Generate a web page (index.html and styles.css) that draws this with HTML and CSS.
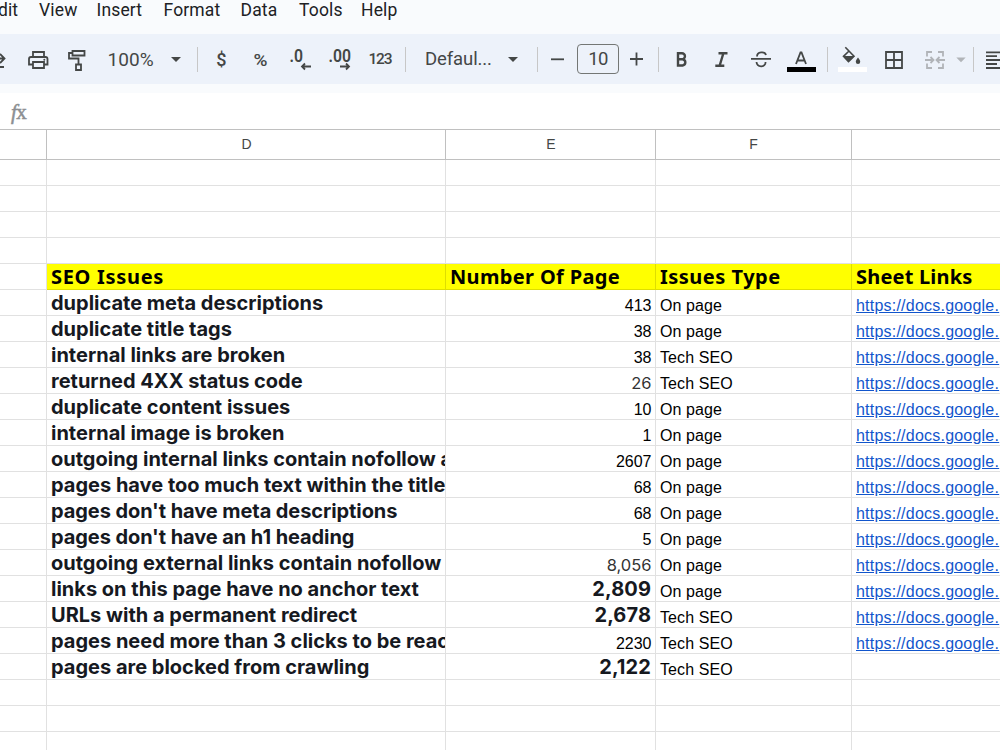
FILE: index.html
```html
<!DOCTYPE html>
<html lang="en">
<head>
<meta charset="utf-8">
<title>SEO Issues</title>
<link rel="stylesheet" href="styles.css">
</head>
<body>
<nav class="menu">
  <span class="m-edit">Edit</span><span class="m-view">View</span><span class="m-insert">Insert</span><span class="m-format">Format</span><span class="m-data">Data</span><span class="m-tools">Tools</span><span class="m-help">Help</span>
</nav>
<div class="toolbar">
  <svg class="w19" viewBox="0 0 19 50"><path d="M-5 24.500H4M0 20l4.500 4.500-4.500 4.500M-5 33H4" class="ln"/></svg>
  <svg class="w38" viewBox="19 34 38 50"><path d="M33 57V52h11v5M33 64.500h-4V59q0-2 2-2h14.500q2 0 2 2v5.500H44M33 62h11v6H33z" class="ln"/><circle cx="44.300" cy="59.700" r="1" class="fl"/></svg>
  <svg class="w38" viewBox="57 34 38 50"><path d="M72.500 51h12v4.500h-12zM72.500 53H69v5.500h9.500V64M76 64.500h5V70h-5z" class="ln"/></svg>
  <div class="zoomlevel"><span class="t-zoom">100%</span><i class="caret"></i></div>
  <b class="sep"></b>
  <svg class="currency" viewBox="198 34 43 50"><text x="216.300" y="66" class="ct">$</text></svg>
  <svg class="w39" viewBox="241 34 39 50"><text x="253.500" y="65.500" class="pct" textLength="14" lengthAdjust="spacingAndGlyphs">%</text></svg>
  <svg class="w40" viewBox="280 34 40 50"><text x="289.500" y="62" class="dec" textLength="13.500" lengthAdjust="spacingAndGlyphs">.0</text><path d="M311 66.500h-9M305 63.500l-3 3 3 3" class="ln"/></svg>
  <svg class="w40" viewBox="320 34 40 50"><text x="328.500" y="62" class="dec" textLength="22.500" lengthAdjust="spacingAndGlyphs">.00</text><path d="M340 66.500h9M346 63.500l3 3-3 3" class="ln"/></svg>
  <div class="number">123</div>
  <b class="sep"></b>
  <div class="font"><span class="t-font">Defaul...</span><i class="caret"></i></div>
  <b class="sep"></b>
  <svg class="w39" viewBox="538 34 39 50"><path d="M551 59.300h13" class="ln"/></svg>
  <div class="size">10</div>
  <svg class="w39" viewBox="619 34 39 50"><path d="M630 59h13M636.500 52.500v13" class="ln"/></svg>
  <b class="sep"></b>
  <svg class="w42" viewBox="659 34 42 50"><path d="M678 53.300h4a2.900 2.900 0 0 1 0 5.900H678zM678 59.200h4.700a3.200 3.200 0 0 1 0 6.300H678z" class="bold"/></svg>
  <svg class="w40" viewBox="701 34 40 50"><path d="M718.500 53.300h9M715.300 65.800h9M723.300 53.500L719.700 65.500" class="bold"/></svg>
  <svg class="w40" viewBox="741 34 40 50"><path d="M751 58.900h20M757 56.500c0-5 8-5.500 9-1.500M756.500 62c.5 6 9.500 5.500 9 0" class="ln"/></svg>
  <svg class="w46" viewBox="781 34 46 50"><path d="M796 64l4.500-11.500h1L806 64M798 60.500h6" class="ln"/><path d="M787 67h29v5h-29z" fill="#000"/></svg>
  <b class="sep"></b>
  <svg class="w46" viewBox="828 34 46 50"><path d="M845.300 47.300l8.700 9-5.500 5.200-5-5.200 5.500-5.300" class="ln thin"/><path d="M843 56h11.500l-6 6z" class="fl"/><path d="M858 57.500c1.300 1.600 2.200 2.800 2.200 4.200a2.200 2.200 0 0 1-4.400 0c0-1.400.9-2.600 2.200-4.200z" class="fl"/><path d="M838 67h29v5h-29z" fill="#fff"/></svg>
  <svg class="w42" viewBox="874 34 42 50"><path d="M886 52h16v16h-16zM894 52v16M886 60h16" class="ln"/></svg>
  <svg class="w57" viewBox="916 34 57 50"><path d="M932 52h-5v4.500M932 68h-5v-4.500M938 52h5v4.500M938 68h5v-4.500M925 60h8M930.500 57l3 3-3 3M945 60h-8M939.500 57l-3 3 3 3" class="ln pale"/><path d="M956.300 57.500h9.400l-4.700 4.700z" class="paleFill"/></svg>
  <b class="sep"></b>
  <svg class="w26" viewBox="974 34 26 50"><path d="M986 52.300h16M986 56.200h11M986 60h16M986 64h11M986 68h16" class="ln"/></svg>
</div>
<div class="formula"><span class="f">f</span><span class="x">x</span></div>
<main class="sheet" id="sheet">
  <div class="row head"><div></div><div>D</div><div>E</div><div>F</div><div></div></div>
</main>
<script src="sheet.js"></script>
</body>
</html>
```
FILE: styles.css
```css
body { margin: 0; width: 1000px; height: 750px; overflow: hidden; background: #fff; font-family: "Liberation Sans", Arial, sans-serif; }
.menu { box-sizing: border-box; height: 34px; background: #f9fbfd; display: flex; font: 17.5px/20px Roboto, sans-serif; color: #202124; overflow: hidden; }
.menu span { flex: none; white-space: nowrap; letter-spacing: .15px; }
.m-edit { width: 51px; margin-left: -12px; }
.m-view { width: 57.500px; }
.m-insert { width: 67px; }
.m-format { width: 77px; }
.m-data { width: 58.500px; }
.m-tools { width: 62px; }
.toolbar { height: 50px; background: #edf2fa; display: flex; align-items: center; overflow: hidden; color: #444746; font-family: Roboto, sans-serif; }
.toolbar svg { height: 50px; flex: none; display: block; }
.w19 { width: 19px; } .w26 { width: 26px; } .w38 { width: 38px; } .w39 { width: 39px; } .w40 { width: 40px; }
.w42 { width: 42px; } .w46 { width: 46px; } .w57 { width: 57px; } .currency { width: 43px; }
.sep { width: 1px; height: 25px; background: #c7c7c7; flex: none; }
.zoomlevel, .font { display: flex; align-items: center; box-sizing: border-box; flex: none; }
.zoomlevel { width: 102px; padding-left: 12.500px; font-size: 19px; }
.font { width: 131px; padding-left: 19px; font-size: 18.500px; }
.t-zoom { width: 63px; letter-spacing: .1px; }
.t-font { width: 83px; letter-spacing: -.1px; }
.caret { border: 5px solid transparent; border-top-color: #444746; border-bottom: 0; }
.number { width: 45px; box-sizing: border-box; padding-left: 8.500px; font-size: 15.500px; font-weight: 500; letter-spacing: -1.200px; flex: none; }
.size { width: 42px; height: 30px; box-sizing: border-box; border: 1px solid #747775; border-radius: 4px; text-align: center; font-size: 18.500px; line-height: 28px; letter-spacing: -.6px; flex: none; }
.ct { font: 500 18px Roboto, sans-serif; fill: #444746; }
.pct { font: 500 17px Roboto, sans-serif; fill: #444746; }
.dec { font: 600 18px Roboto, sans-serif; fill: #444746; }
.ln { fill: none; stroke: #444746; stroke-width: 1.800; }
.bold { fill: none; stroke: #444746; stroke-width: 2.400; }
.thin { stroke-width: 1.600; }
.pale { stroke: #b1b4b8; }
.fl { fill: #444746; }
.paleFill { fill: #b1b4b8; }
.formula { height: 45px; box-sizing: border-box; border-top: 9px solid #f9fbfd; padding: 7px 0 0 11px; font: 21px/24px "Liberation Serif", serif; color: #8c8f92; -webkit-text-stroke: .5px #8c8f92; }
.f { font-style: italic; }
.x { margin-left: -.5px; }
.sheet { border-top: 1px solid #c0c0c0; }
.row { display: grid; grid-template-columns: 47px 399px 210px 196px 148px; height: 26px; }
.row > div { box-sizing: border-box; border-right: 1px solid #e1e1e1; border-bottom: 1px solid #e1e1e1; overflow: hidden; white-space: nowrap; padding-left: 4px; font-size: 16px; line-height: 31px; color: #000; }
.row > div:last-child { border-right: 0; }
.row > div:first-child { padding: 0; }
.row > div:nth-child(4) { letter-spacing: .1px; }
.row.head { height: 30px; }
.row.head > div { border-color: #c0c0c0; text-align: center; padding: 0 0 0 1px; font-size: 14px; line-height: 29px; color: #444746; }
.row.head > div:nth-child(4) { padding: 0; letter-spacing: 0; }
.row .issue { font: 700 20px/27px Inter, sans-serif; letter-spacing: 0; color: #16191f; }
.row .apostrophe { letter-spacing: -.08px; }
.row .count { text-align: right; padding-right: 3.500px; }
.row .gray { color: #333; font-family: Inter, sans-serif; font-size: 16.500px; line-height: 30px; }
.row .big { font: 700 20px/26px Inter, sans-serif; letter-spacing: .1px; padding-right: 4px; color: #16191f; }
.row.title > div:not(:first-child) { background: #ff0; border-color: #dede00; font: 700 20px/26px "Noto Sans", sans-serif; }
.row.title > .t1 { letter-spacing: .7px; }
.row.title > .t2 { letter-spacing: .35px; }
.row.title > div.t3 { letter-spacing: .5px; }
.row.title > .t4 { letter-spacing: .2px; }
.row .link { color: #1155cc; text-decoration: underline; letter-spacing: .22px; }
```
FILE: sheet.js
```js
const records = [
  ["duplicate meta descriptions", "413", "On page"],
  ["duplicate title tags", "38", "On page"],
  ["internal links are broken", "38", "Tech SEO"],
  ["returned 4XX status code", "26", "Tech SEO", "gray"],
  ["duplicate content issues", "10", "On page"],
  ["internal image is broken", "1", "On page"],
  ["outgoing internal links contain nofollow a", "2607", "On page"],
  ["pages have too much text within the title", "68", "On page"],
  ["pages don't have meta descriptions", "68", "On page"],
  ["pages don't have an h1 heading", "5", "On page"],
  ["outgoing external links contain nofollow a", "8,056", "On page", "gray"],
  ["links on this page have no anchor text", "2,809", "On page", "big"],
  ["URLs with a permanent redirect", "2,678", "Tech SEO", "big"],
  ["pages need more than 3 clicks to be reac", "2230", "Tech SEO"],
  ["pages are blocked from crawling", "2,122", "Tech SEO", "big"]
];
const sheet = document.getElementById("sheet");

function addRow(rowClass, cells) {
  const row = document.createElement("div");
  row.className = "row " + rowClass;
  for (const [text, cls] of cells) {
    const cell = document.createElement("div");
    cell.textContent = text;
    cell.className = cls || "";
    row.append(cell);
  }
  sheet.append(row);
}
const blank = () => addRow("", [[""], [""], [""], [""], [""]]);

for (let i = 0; i < 4; i++) blank();
addRow("title", [[""], ["SEO Issues", "t1"], ["Number Of Page", "t2"], ["Issues Type", "t3"], ["Sheet Links", "t4"]]);
records.forEach(([issue, count, type, style], i) => {
  const last = i === records.length - 1;
  const issueClass = issue.includes("'") ? "issue apostrophe" : "issue";
  addRow("", [[""], [issue, issueClass], [count, "count " + (style || "")], [type], last ? [""] : ["https://docs.google.", "link"]]);
});
for (let i = 0; i < 3; i++) blank();
```
